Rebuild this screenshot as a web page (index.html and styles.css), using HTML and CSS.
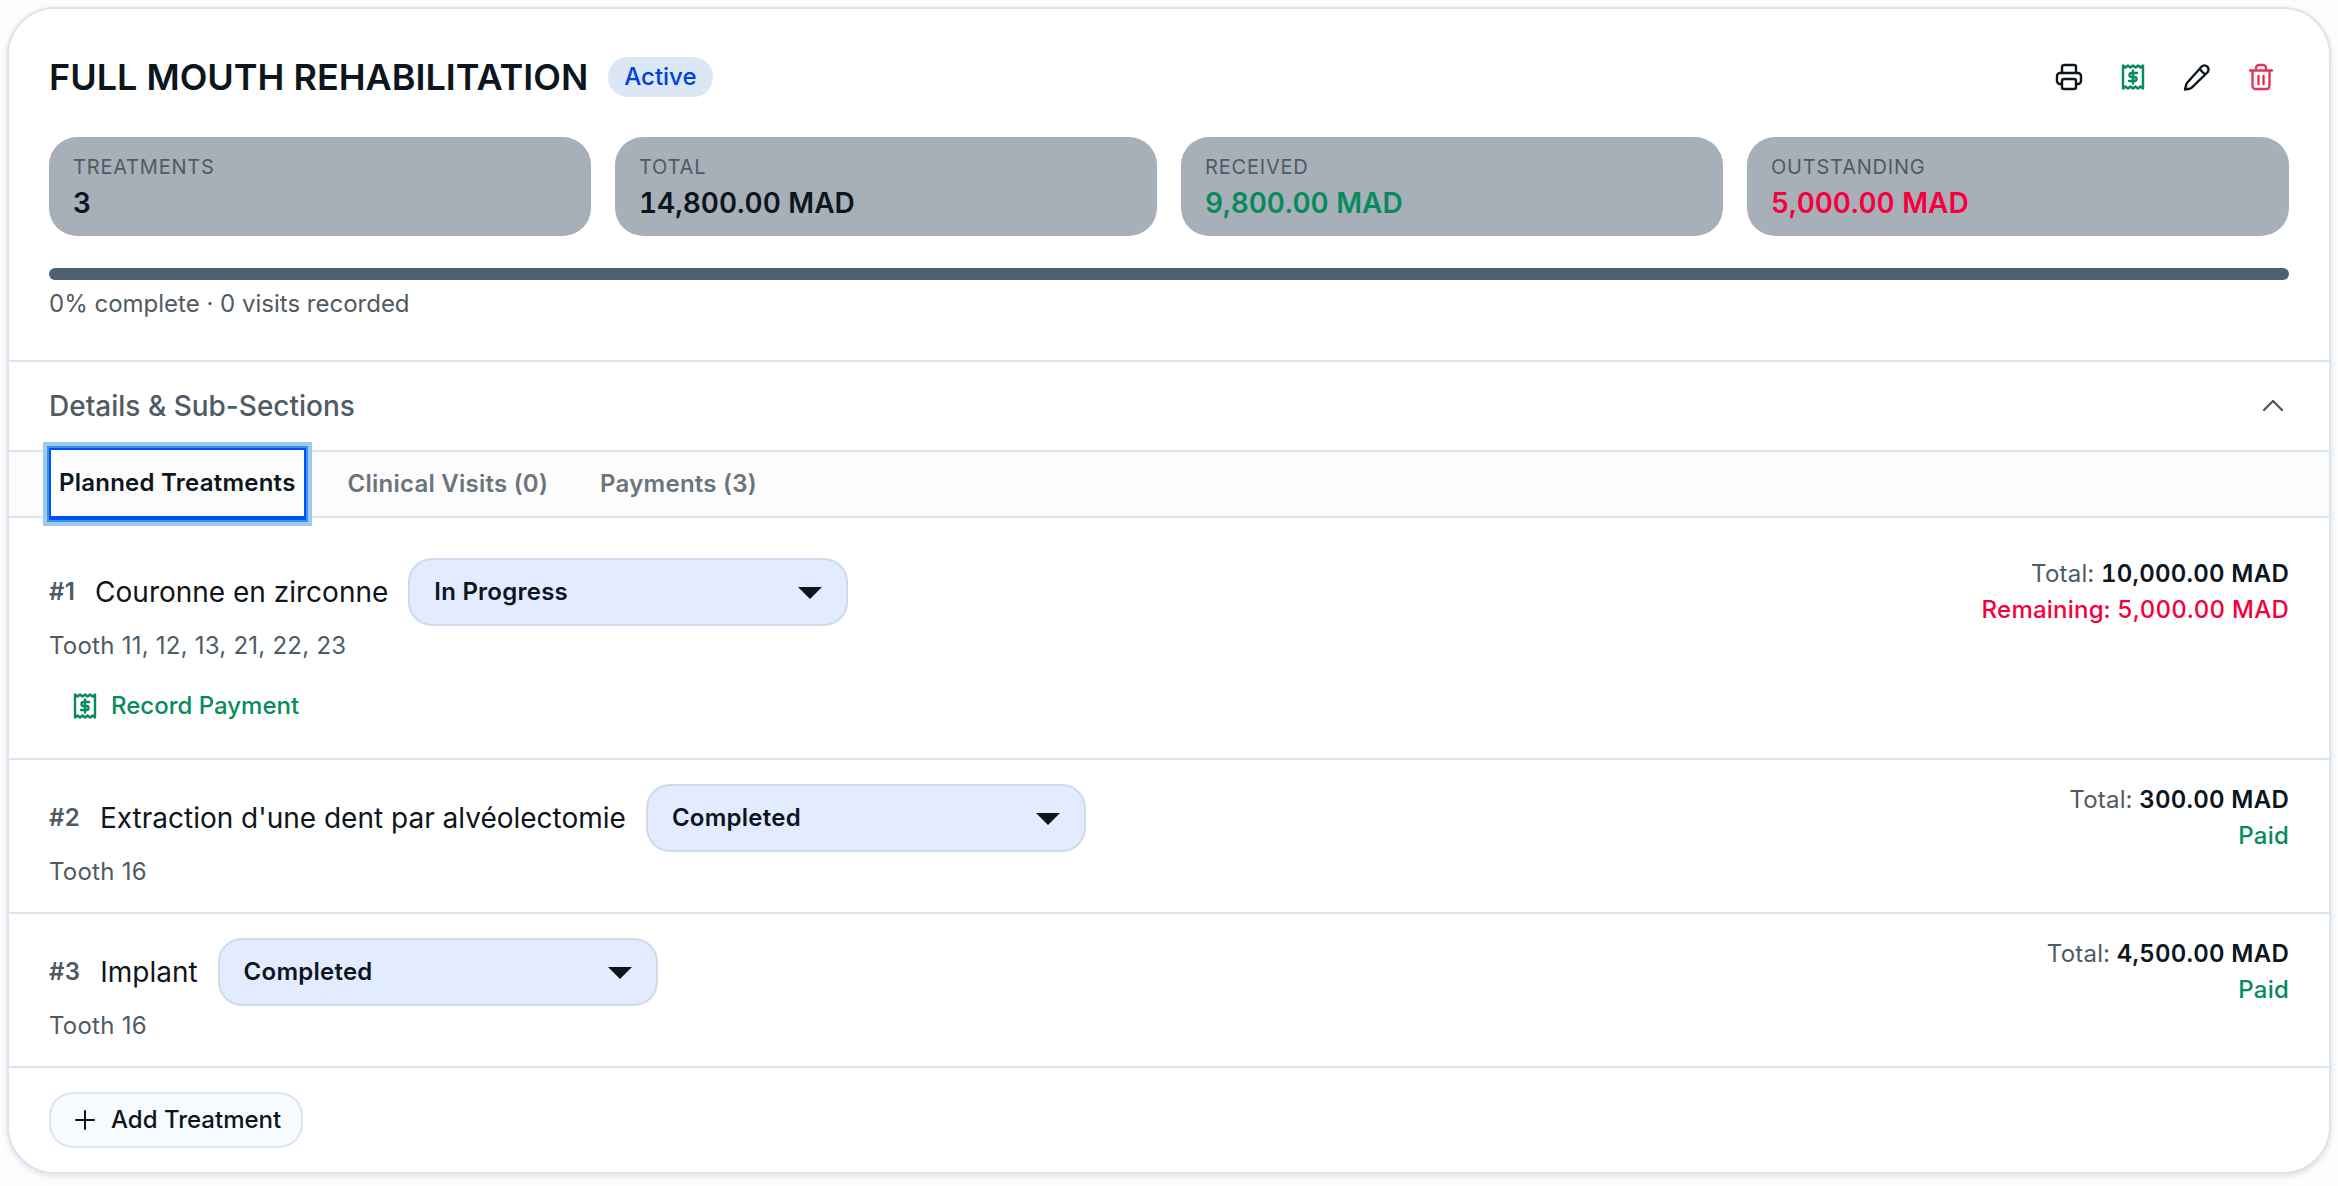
FILE: index.html
```html
<!DOCTYPE html>
<html lang="en">
<head>
<meta charset="utf-8">
<meta name="viewport" content="width=device-width, initial-scale=1">
<title>Full Mouth Rehabilitation</title>
<link rel="stylesheet" href="styles.css">
</head>
<body>
<svg class="sprite" aria-hidden="true">
  <symbol id="receipt" viewBox="0 0 32 32">
    <path d="M6 4.500l2.500 2 2.500-2 2.500 2 2.500-2 2.500 2 2.500-2 2.500 2 2.500-2v23l-2.500-2-2.500 2-2.500-2-2.500 2-2.500-2-2.500 2-2.500-2-2.500 2z"/>
    <path d="M20 12h-5.500a2 2 0 0 0 0 4h3a2 2 0 0 1 0 4H12M16 9.500v13"/>
  </symbol>
</svg>
<main class="card">
  <header class="summary">
    <div class="title-row">
      <h1 class="title">FULL MOUTH REHABILITATION</h1>
      <span class="badge">Active</span>
      <div class="actions">
        <button class="icon-button" type="button" aria-label="Print">
          <svg class="icon" viewBox="0 0 32 32"><path d="M9 12V6a2 2 0 0 1 2-2h10a2 2 0 0 1 2 2v6M9 23H7a3 3 0 0 1-3-3v-5a3 3 0 0 1 3-3h18a3 3 0 0 1 3 3v5a3 3 0 0 1-3 3h-2"/><rect x="9" y="18" width="14" height="10" rx="2"/></svg>
        </button>
        <button class="icon-button green" type="button" aria-label="Record payment">
          <svg class="icon"><use href="#receipt"/></svg>
        </button>
        <button class="icon-button" type="button" aria-label="Edit">
          <svg class="icon" viewBox="0 0 32 32"><path d="M20.500 5.700a4 4 0 0 1 5.800 5.800L11 26.300a6 6 0 0 1-2.500 1.400L4 28.500l1.200-4.700A6 6 0 0 1 6.600 21.300zM18.500 8l5.500 5.500"/></svg>
        </button>
        <button class="icon-button red" type="button" aria-label="Delete">
          <svg class="icon" viewBox="0 0 32 32"><path d="M5 9.500h22M11 9V7a3 3 0 0 1 3-3h4a3 3 0 0 1 3 3v2M7.500 9.500V25a3 3 0 0 0 3 3h11a3 3 0 0 0 3-3V9.500M13.500 15v8M18.500 15v8"/></svg>
        </button>
      </div>
    </div>
    <dl class="stats">
      <div class="stat"><dt>TREATMENTS</dt><dd>3</dd></div>
      <div class="stat"><dt>TOTAL</dt><dd>14,800.00 MAD</dd></div>
      <div class="stat"><dt>RECEIVED</dt><dd class="green">9,800.00 MAD</dd></div>
      <div class="stat"><dt>OUTSTANDING</dt><dd class="rose">5,000.00 MAD</dd></div>
    </dl>
    <div class="progress" role="progressbar" aria-label="Plan progress" aria-valuenow="0" aria-valuemin="0" aria-valuemax="100"></div>
    <p class="note">0% complete · 0 visits recorded</p>
  </header>

  <button class="toggle" type="button" aria-expanded="true">
    <span>Details &amp; Sub-Sections</span>
    <svg class="icon" viewBox="0 0 32 32"><path d="M7 20l9-9 9 9"/></svg>
  </button>

  <nav class="tabs" role="tablist">
    <button class="tab selected" type="button" role="tab" aria-selected="true">Planned Treatments</button>
    <button class="tab" type="button" role="tab" aria-selected="false">Clinical Visits (0)</button>
    <button class="tab" type="button" role="tab" aria-selected="false">Payments (3)</button>
  </nav>

  <section class="treatments">
    <article class="treatment">
      <div class="info">
        <div class="name-row">
          <span class="number">#1</span>
          <label class="name" for="status-1">Couronne en zirconne</label>
          <span class="select-box">
            <select id="status-1"><option>Planned</option><option selected>In Progress</option><option>Completed</option></select>
            <svg class="caret" viewBox="0 0 24 12"><path d="M0 0h24L12 12z"/></svg>
          </span>
        </div>
        <p class="note teeth">Tooth 11, 12, 13, 21, 22, 23</p>
        <button class="record green" type="button"><svg class="icon"><use href="#receipt"/></svg>Record Payment</button>
      </div>
      <div class="amounts">
        <p class="note">Total: <strong>10,000.00 MAD</strong></p>
        <p class="due rose">Remaining: 5,000.00 MAD</p>
      </div>
    </article>
    <article class="treatment">
      <div class="info">
        <div class="name-row">
          <span class="number">#2</span>
          <label class="name" for="status-2">Extraction d'une dent par alvéolectomie</label>
          <span class="select-box">
            <select id="status-2"><option>Planned</option><option>In Progress</option><option selected>Completed</option></select>
            <svg class="caret" viewBox="0 0 24 12"><path d="M0 0h24L12 12z"/></svg>
          </span>
        </div>
        <p class="note teeth">Tooth 16</p>
      </div>
      <div class="amounts">
        <p class="note">Total: <strong>300.00 MAD</strong></p>
        <p class="due green">Paid</p>
      </div>
    </article>
    <article class="treatment">
      <div class="info">
        <div class="name-row">
          <span class="number">#3</span>
          <label class="name" for="status-3">Implant</label>
          <span class="select-box">
            <select id="status-3"><option>Planned</option><option>In Progress</option><option selected>Completed</option></select>
            <svg class="caret" viewBox="0 0 24 12"><path d="M0 0h24L12 12z"/></svg>
          </span>
        </div>
        <p class="note teeth">Tooth 16</p>
      </div>
      <div class="amounts">
        <p class="note">Total: <strong>4,500.00 MAD</strong></p>
        <p class="due green">Paid</p>
      </div>
    </article>
  </section>

  <footer class="footer">
    <button class="add" type="button"><svg class="plus" viewBox="0 0 24 24"><path d="M12 3v18M3 12h18"/></svg>Add Treatment</button>
  </footer>
</main>
</body>
</html>
```

FILE: styles.css
```css
* { box-sizing: border-box; }

body {
  margin: 0;
  padding: 7px 7px 8px;
  background: #fdfdfd;
  color: #0d151d;
  font: 400 24px/32px Inter, "Open Sans", sans-serif;
}

h1, p, dl, dd { margin: 0; }

button, select {
  margin: 0;
  border: 0;
  background: none;
  color: inherit;
  font: inherit;
  letter-spacing: inherit;
  cursor: pointer;
}

.sprite { position: absolute; width: 0; height: 0; }

.icon {
  width: 32px;
  height: 32px;
  fill: none;
  stroke: currentColor;
  stroke-width: 2.4;
  stroke-linecap: round;
  stroke-linejoin: round;
}

.green { color: #078b5b; }
.red { color: #e5345a; }
.rose { color: #f5003d; }

.card {
  border: 2px solid #d9e5f0;
  border-radius: 48px;
  background: #fff;
  box-shadow: 0 2px 6px rgb(0 0 0 / 12%);
}

.summary { padding: 40px; border-bottom: 2px solid #d9e5f0; }

.title-row { display: flex; align-items: center; gap: 20px; }

.title {
  font-size: 36px;
  line-height: 48px;
  font-weight: 600;
}

.badge {
  padding: 4px 16px;
  border-radius: 20px;
  background: #dbe7f5;
  color: #0041d9;
  font-weight: 500;
}

.actions { display: flex; gap: 8px; margin-left: auto; }

.icon-button {
  display: grid;
  place-items: center;
  width: 56px;
  height: 56px;
  padding: 0;
}

.stats {
  display: grid;
  grid-template-columns: repeat(4, 1fr);
  gap: 24px;
  margin-top: 32px;
}

.stat {
  display: grid;
  gap: 4px;
  padding: 16px 24px 15px;
  border-radius: 28px;
  background: #a7afb9;
}

.stat dt {
  color: #4f5b64;
  font-size: 20px;
  line-height: 28px;
  letter-spacing: 0.04em;
}

.stat dd {
  font-size: 28px;
  line-height: 36px;
  font-weight: 600;
  font-variant-numeric: tabular-nums;
}

.progress {
  height: 12px;
  margin: 32px 0 8px;
  border-radius: 6px;
  background: #4f6072;
}

.note { color: #4f5b64; }
.note strong { color: #0d151d; font-weight: 600; }
.teeth { letter-spacing: 0.01em; }

.toggle {
  display: flex;
  align-items: center;
  justify-content: space-between;
  width: 100%;
  height: 90px;
  padding: 0 40px;
  border-bottom: 2px solid #d9e5f0;
  color: #4f5b64;
  font-size: 28px;
  font-weight: 500;
}

.tabs {
  display: flex;
  gap: 32px;
  height: 66px;
  padding: 0 40px;
  border-bottom: 2px solid #d9e5f0;
  background: #fcfcfc;
}

.tab {
  height: 72px;
  margin-top: -4px;
  padding: 0 10px;
  color: #6b747c;
  font-weight: 600;
  letter-spacing: 0.01em;
}

.tab.selected {
  border: 2px solid #004fff;
  border-bottom-width: 4px;
  padding: 0 8px;
  background: #fcfcfc;
  color: #0d151d;
  box-shadow: 0 0 0 2px #3b93dc, 0 0 0 6px #9bcaec;
}

.treatments { padding-top: 16px; }

.treatment {
  display: flex;
  justify-content: space-between;
  gap: 24px;
  padding: 24px 40px;
  border-bottom: 2px solid #d9e5f0;
}

.info, .amounts { display: flex; flex-direction: column; gap: 4px; }
.info { align-items: flex-start; }

.amounts {
  text-align: right;
  font-variant-numeric: tabular-nums;
  letter-spacing: 0.01em;
}

.due { font-weight: 500; }

.name-row { display: flex; align-items: center; }

.number {
  margin-right: 20px;
  color: #4f5b64;
  font-weight: 600;
  letter-spacing: 0.01em;
}

.name { margin-right: 20px; font-size: 28px; line-height: 36px; }

.select-box { position: relative; display: flex; }

.select-box select {
  appearance: none;
  width: 440px;
  height: 68px;
  padding: 0 64px 0 24px;
  border: 2px solid #cfdbe8;
  border-radius: 24px;
  background: #e3ebff;
  font-weight: 600;
  letter-spacing: 0.01em;
}

.caret {
  position: absolute;
  top: 29px;
  right: 26px;
  width: 24px;
  height: 12px;
  fill: #0d151d;
  pointer-events: none;
}

.record {
  display: flex;
  align-items: center;
  gap: 10px;
  height: 56px;
  margin-top: 12px;
  padding: 0 20px;
  font-weight: 500;
}

.footer { padding: 24px 40px; }

.add {
  display: flex;
  align-items: center;
  gap: 14px;
  height: 56px;
  padding: 0 20px 0 22px;
  border: 2px solid #d9e5f0;
  border-radius: 24px;
  background: #f7fbff;
  font-weight: 500;
}

.plus { width: 24px; height: 24px; fill: none; stroke: currentColor; stroke-width: 2; stroke-linecap: round; }
```
